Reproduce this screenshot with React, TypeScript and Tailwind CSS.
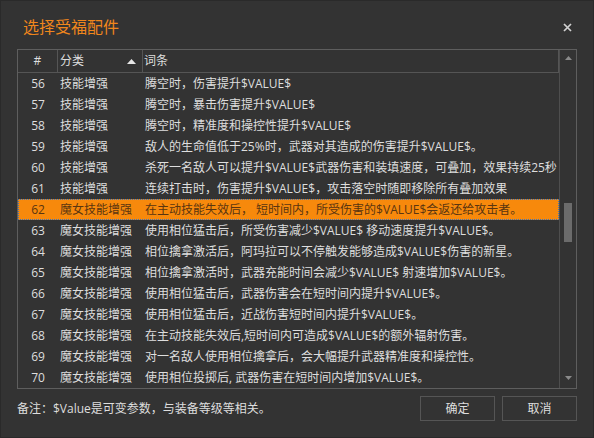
import React from "react";

const rows: [number, string, string][] = [
  [56, "技能增强", "腾空时，伤害提升$VALUE$"],
  [57, "技能增强", "腾空时，暴击伤害提升$VALUE$"],
  [58, "技能增强", "腾空时，精准度和操控性提升$VALUE$"],
  [59, "技能增强", "敌人的生命值低于25%时，武器对其造成的伤害提升$VALUE$。"],
  [60, "技能增强", "杀死一名敌人可以提升$VALUE$武器伤害和装填速度，可叠加，效果持续25秒"],
  [61, "技能增强", "连续打击时，伤害提升$VALUE$，攻击落空时随即移除所有叠加效果"],
  [62, "魔女技能增强", "在主动技能失效后， 短时间内，所受伤害的$VALUE$会返还给攻击者。"],
  [63, "魔女技能增强", "使用相位猛击后，所受伤害减少$VALUE$ 移动速度提升$VALUE$。"],
  [64, "魔女技能增强", "相位擒拿激活后，阿玛拉可以不停触发能够造成$VALUE$伤害的新星。"],
  [65, "魔女技能增强", "相位擒拿激活时，武器充能时间会减少$VALUE$ 射速增加$VALUE$。"],
  [66, "魔女技能增强", "使用相位猛击后，武器伤害会在短时间内提升$VALUE$。"],
  [67, "魔女技能增强", "使用相位猛击后，近战伤害短时间内提升$VALUE$。"],
  [68, "魔女技能增强", "在主动技能失效后,短时间内可造成$VALUE$的额外辐射伤害。"],
  [69, "魔女技能增强", "对一名敌人使用相位擒拿后，会大幅提升武器精准度和操控性。"],
  [70, "魔女技能增强", "使用相位投掷后, 武器伤害在短时间内增加$VALUE$。"],
];

const SELECTED = 62;

export default function App() {
  return (
    <div
      className="w-[594px] h-[438px] bg-[#333333] border border-[#2a2a2a] flex flex-col text-[12px] text-[#dedede] overflow-hidden"
      style={{ fontFamily: '"Open Sans", "Noto Sans CJK SC", sans-serif' }}
    >
      {/* title bar */}
      <div className="h-[48px] flex items-center justify-between pl-[22px] pr-[21px] pt-[4px]">
        <span className="text-[16px] text-[#f0861c] leading-none">选择受福配件</span>
        <svg width="9" height="9" viewBox="0 0 9 9">
          <path d="M1 1 L8 8 M8 1 L1 8" stroke="#d2d2d2" strokeWidth="1.7" />
        </svg>
      </div>

      {/* list */}
      <div className="mx-[16px] h-[340px] border border-[#5e5e5e] flex">
        <div className="flex-1 flex flex-col overflow-hidden">
          <div className="h-[23px] shrink-0 flex border-b border-[#555555] border-r">
            <div className="w-[40px] border-r border-[#555555] flex items-center justify-center">#</div>
            <div className="w-[85px] border-r border-[#555555] flex items-center justify-between pl-[2px] pr-[6px]">
              <span>分类</span>
              <svg width="9" height="5" viewBox="0 0 9 5">
                <path d="M0 5 L4.5 0 L9 5 Z" fill="#e6e6e6" />
              </svg>
            </div>
            <div className="flex-1 flex items-center pl-[1px]">词条</div>
          </div>
          <div className="flex-1 overflow-hidden">
            {rows.map(([id, cat, text]) => {
              const sel = id === SELECTED;
              return (
                <div
                  key={id}
                  className={`h-[21px] flex items-center whitespace-nowrap ${
                    sel ? "bg-[#f7890c] text-[#5a3510] border border-dotted border-[#3f74b8]" : ""
                  }`}
                >
                  <div className={`w-[40px] shrink-0 text-center ${sel ? "-ml-px" : ""}`}>{id}</div>
                  <div className="w-[85px] shrink-0 pl-[2px]">{cat}</div>
                  <div className="flex-1 pl-[2px] overflow-hidden">{text}</div>
                </div>
              );
            })}
          </div>
        </div>

        {/* scrollbar */}
        <div className="w-[17px] border-l border-[#4e4e4e] flex flex-col items-center">
          <svg width="7" height="4" viewBox="0 0 7 4" className="mt-[6px]">
            <path d="M0 4 L3.5 0 L7 4 Z" fill="#8a8a8a" />
          </svg>
          <div className="mt-[143px] w-[8px] h-[39px] bg-[#6b6b6b]" />
          <div className="flex-1" />
          <svg width="7" height="4" viewBox="0 0 7 4" className="mb-[8px]">
            <path d="M0 0 L3.5 4 L7 0 Z" fill="#8a8a8a" />
          </svg>
        </div>
      </div>

      {/* footer */}
      <div className="flex items-start justify-between pl-[16px] pr-[16px] pt-[7px]">
        <span className="mt-[4px]">备注：$Value是可变参数，与装备等级等相关。</span>
        <div className="flex gap-[7px]">
          <button className="w-[75px] h-[25px] border border-[#555555] flex items-center justify-center text-[#dedede]">
            确定
          </button>
          <button className="w-[75px] h-[25px] border border-[#555555] flex items-center justify-center text-[#dedede]">
            取消
          </button>
        </div>
      </div>
    </div>
  );
}
